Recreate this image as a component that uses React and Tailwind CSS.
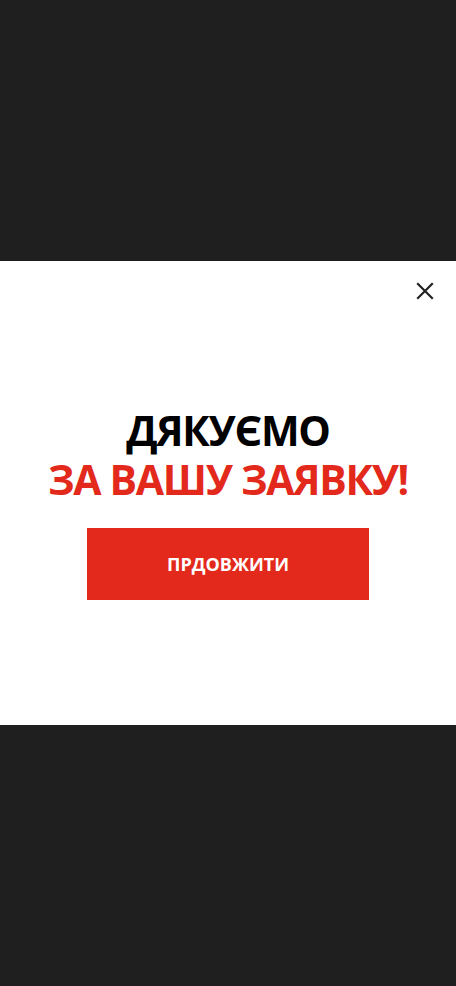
import React from "react";

const App = () => {
  return (
    <div className="min-h-[986px] w-full bg-[#1f1f1f] flex flex-col justify-center" style={{ fontFamily: '"Open Sans", "Noto Sans", sans-serif' }}>
      <div className="relative bg-white h-[464px] flex flex-col items-center pt-[145px]">
        <button className="absolute right-[21px] top-[20px] w-[20px] h-[20px] flex items-center justify-center text-[#222]">
          <svg width="18" height="18" viewBox="0 0 18 18" fill="none" stroke="currentColor" strokeWidth="2.2" strokeLinecap="square">
            <path d="M2 2L16 16M16 2L2 16" />
          </svg>
        </button>
        <h1 className="text-center font-bold uppercase text-[41px] leading-[49px] tracking-[-1.3px]">
          <span className="block text-black">Дякуємо</span>
          <span className="block text-[#e2291c]">За вашу заявку!</span>
        </h1>
        <button className="mt-[24px] w-[282px] h-[72px] bg-[#e3291c] text-white font-bold text-[18px] uppercase">
          Прдовжити
        </button>
      </div>
    </div>
  );
};

export default App;
